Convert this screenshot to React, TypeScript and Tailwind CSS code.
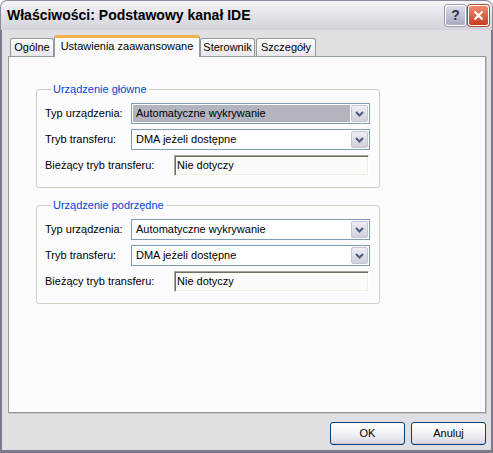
import React from 'react';

const font = { fontFamily: '"Liberation Sans", Arial, sans-serif' };

const Chevron = () => (
  <svg width="9" height="6" viewBox="0 0 9 6">
    <path d="M1 1 L4.5 4.5 L8 1" fill="none" stroke="#4d5a78" strokeWidth="2" />
  </svg>
);

const Combo = ({ value, selected }: { value: string; selected?: boolean }) => (
  <div className="flex h-[21px] w-[239px] border border-[#7f9db9] bg-white p-[1px]">
    <div className={selected ? 'flex flex-1 items-center bg-[#b2b4bf] pl-[3px] mr-[1px]' : 'flex flex-1 items-center pl-[3px] mr-[1px]'}>
      {value}
    </div>
    <div className="flex w-[17px] items-center justify-center rounded-[2px] border border-[#c3c6d6] bg-gradient-to-b from-[#eeeef4] to-[#cfd0dc]">
      <Chevron />
    </div>
  </div>
);

const ReadOnly = ({ value }: { value: string }) => (
  <div className="flex h-[21px] w-[195px] items-center border border-t-[#aca899] border-l-[#aca899] border-r-white border-b-white bg-[#fbfbfa] pl-[2px] shadow-[inset_1px_1px_0_#716f64,inset_-1px_-1px_0_#f1efe2]">
    {value}
  </div>
);

const Group = ({ title, selected }: { title: string; selected?: boolean }) => (
  <fieldset className="w-[344px] rounded-[3px] border border-[#d0d0bf] pb-[11px] pl-[8px] pt-[7px]">
    <legend className="ml-[6px] px-[2px] leading-[13px] text-[#0046d5]">{title}</legend>
    <div className="flex flex-col gap-[5px]">
      <div className="flex items-center">
        <span className="w-[86px]">Typ urządzenia:</span>
        <Combo value="Automatyczne wykrywanie" selected={selected} />
      </div>
      <div className="flex items-center">
        <span className="w-[86px]">Tryb transferu:</span>
        <Combo value="DMA jeżeli dostępne" />
      </div>
      <div className="flex items-center">
        <span className="w-[129px]">Bieżący tryb transferu:</span>
        <ReadOnly value="Nie dotyczy" />
      </div>
    </div>
  </fieldset>
);

const Tab = ({ label, w, active }: { label: string; w: string; active?: boolean }) =>
  active ? (
    <div className={`${w} relative z-10 -mb-[1px] flex h-[22px] items-center justify-center rounded-t-[3px] border-x border-t-[3px] border-x-[#919b9c] border-t-[#f5b04a] bg-[#fcfcfe] pb-[2px]`}>
      {label}
    </div>
  ) : (
    <div className={`${w} flex h-[18px] items-center justify-center rounded-t-[3px] border border-b-0 border-[#919b9c] bg-gradient-to-b from-white to-[#e6e6ec]`}>
      {label}
    </div>
  );

const Button = ({ label }: { label: string }) => (
  <button className="h-[23px] w-[75px] rounded-[3px] border border-[#003c74] bg-gradient-to-b from-white via-[#f2f2f5] to-[#d8d8e2] text-black shadow-[inset_0_-1px_0_#c8c8d4]">
    {label}
  </button>
);

export default function App() {
  return (
    <div className="flex h-[453px] w-[493px] flex-col bg-white text-[11px] text-black" style={font}>
      <div className="flex h-[30px] items-center rounded-t-[7px] border-x border-t border-[#8c8c9c] bg-gradient-to-b from-[#f6f6f9] via-[#e2e2e8] to-[#d2d2da] pl-[6px] pr-[3px]">
        <span className="flex-1 text-[14px] font-bold">Właściwości: Podstawowy kanał IDE</span>
        <div className="flex gap-[2px]">
          <div className="flex h-[21px] w-[21px] items-center justify-center rounded-[3px] border border-white bg-gradient-to-b from-[#dcdde8] to-[#a8abc2] text-[14px] font-bold text-[#2c3250] shadow-[0_0_0_1px_#9a9cb2]">
            ?
          </div>
          <div className="flex h-[21px] w-[21px] items-center justify-center rounded-[3px] border border-white bg-gradient-to-b from-[#f08a6c] to-[#c93a1e] shadow-[0_0_0_1px_#b04a3a]">
            <svg width="11" height="11" viewBox="0 0 11 11">
              <path d="M1.5 1.5 L9.5 9.5 M9.5 1.5 L1.5 9.5" stroke="white" strokeWidth="2.2" />
            </svg>
          </div>
        </div>
      </div>
      <div className="flex flex-1 flex-col border-x-2 border-b-[3px] border-[#7a7a8c] bg-[#e0dfe3] pb-[5px] pl-[6px] pr-[5px] pt-[5px]">
        <div className="flex items-end pl-[2px]">
          <Tab label="Ogólne" w="w-[44px]" />
          <Tab label="Ustawienia zaawansowane" w="w-[146px]" active />
          <Tab label="Sterownik" w="w-[55px]" />
          <div className="w-[1px]" />
          <Tab label="Szczegóły" w="w-[60px]" />
        </div>
        <div className="flex h-[357px] flex-col gap-[11px] border border-[#919b9c] bg-[#fcfcfe] pl-[27px] pt-[26px] shadow-[1px_1px_0_#c4c4cc]">
          <Group title="Urządzenie główne" selected />
          <Group title="Urządzenie podrzędne" />
        </div>
        <div className="mt-[9px] flex justify-end gap-[6px]">
          <Button label="OK" />
          <Button label="Anuluj" />
        </div>
      </div>
    </div>
  );
}
